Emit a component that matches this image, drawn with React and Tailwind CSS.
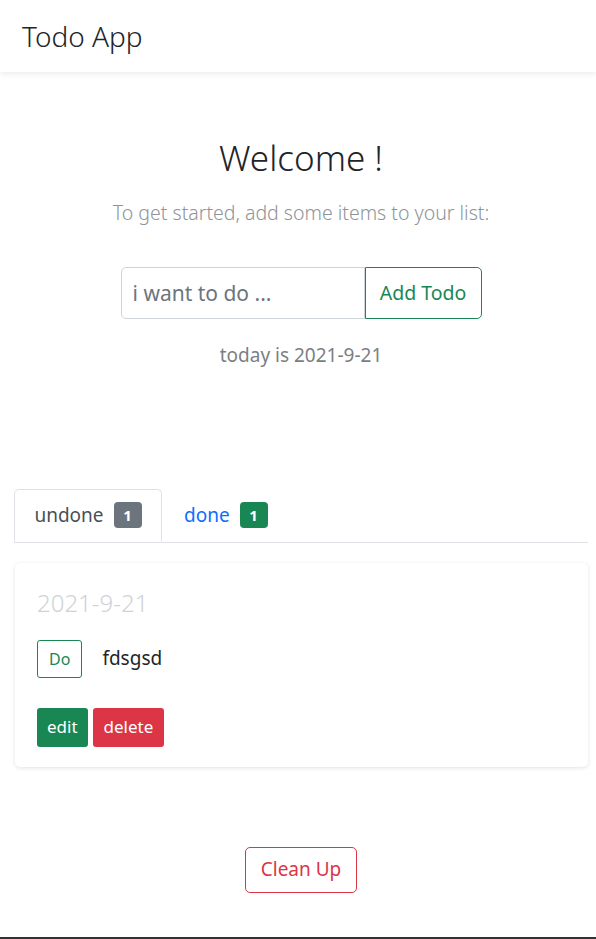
export default function App() {
  return (
    <div className="min-h-screen flex flex-col bg-white text-[#212529] font-['Segoe_UI','Noto_Sans',sans-serif]">
      {/* Navbar */}
      <nav className="h-[72px] flex items-center px-[22px] shadow-[0_2px_6px_rgba(0,0,0,0.08)]">
        <span className="text-[28px] font-light leading-none">Todo App</span>
      </nav>

      <main className="flex-1 flex flex-col ml-[14px] mr-[8px]">
        {/* Header */}
        <section className="flex flex-col items-center pt-[64px]">
          <h1 className="text-[35px] font-light leading-tight">Welcome !</h1>
          <p className="mt-[18px] text-[19.5px] font-light text-[#8e9499]">
            To get started, add some items to your list:
          </p>
          <div className="mt-[40px] flex">
            <input
              className="w-[244px] h-[52px] px-[11px] text-[21px] border border-[#ced4da] rounded-l-[5px] placeholder:text-[#6c757d] outline-none"
              placeholder="i want to do ..."
            />
            <button className="w-[117px] h-[52px] text-[19.5px] text-[#198754] border border-[#198754] rounded-r-[5px]">
              Add Todo
            </button>
          </div>
          <p className="mt-[22px] text-[19px] text-[#7a7f84]">today is 2021-9-21</p>
        </section>

        {/* Tabs */}
        <div className="mt-[119px] flex border-b border-[#dee2e6]">
          <div className="w-[148px] h-[53px] -mb-px flex items-center justify-center gap-[10px] border border-[#dee2e6] border-b-white rounded-t-[5px] bg-white">
            <span className="text-[19px] text-[#495057]">undone</span>
            <span className="w-[28px] h-[26px] flex items-center justify-center text-[15px] font-bold text-white bg-[#6c757d] rounded-[4px]">1</span>
          </div>
          <div className="h-[53px] px-[22px] flex items-center gap-[10px]">
            <span className="text-[19px] text-[#0d6efd]">done</span>
            <span className="w-[28px] h-[26px] flex items-center justify-center text-[15px] font-bold text-white bg-[#198754] rounded-[4px]">1</span>
          </div>
        </div>

        {/* Card */}
        <div className="mt-[20px] ml-px rounded-[5px] shadow-[0_1px_4px_rgba(0,0,0,0.12)] px-[22px] pt-[22px] pb-[20px]">
          <div className="text-[24px] font-light text-[#cfd2d6]">2021-9-21</div>
          <div className="mt-[19px] flex items-center gap-[20px]">
            <button className="h-[38px] px-[11px] text-[16px] text-[#198754] border border-[#198754] rounded-[3px]">
              Do
            </button>
            <span className="text-[19px] text-[#212529]">fdsgsd</span>
          </div>
          <div className="mt-[30px] flex gap-[5px]">
            <button className="h-[39px] px-[10px] text-[17px] text-white bg-[#198754] rounded-[3px]">edit</button>
            <button className="h-[39px] px-[11px] text-[17px] text-white bg-[#dc3545] rounded-[3px]">delete</button>
          </div>
        </div>

        {/* Clean up */}
        <div className="mt-[80px] flex justify-center">
          <button className="h-[46px] px-[15px] text-[19px] text-[#dc3545] border border-[#dc3545] rounded-[5px]">
            Clean Up
          </button>
        </div>
      </main>

      <div className="h-[2px] bg-[#333]" />
    </div>
  );
}
